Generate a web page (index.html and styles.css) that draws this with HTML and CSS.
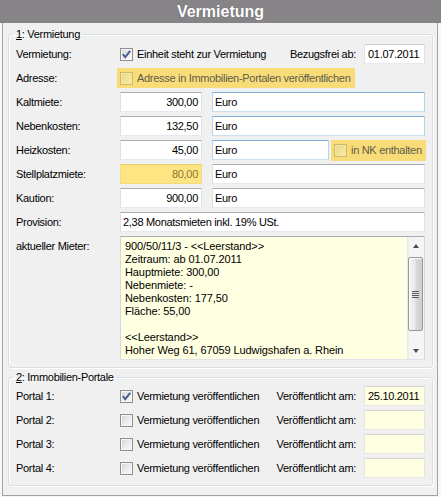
FILE: index.html
```html
<!DOCTYPE html>
<html lang="de">
<head>
<meta charset="utf-8">
<title>Vermietung</title>
<link rel="stylesheet" href="styles.css">
</head>
<body>
<div class="header">Vermietung</div>
<div class="frame">
  <fieldset class="group g1">
    <legend><u>1</u>: Vermietung</legend>
    <div class="rows">
      <div class="row">
        <div class="label">Vermietung:</div>
        <div class="ctrl">
          <div class="check"><span class="cb"><svg width="11" height="11" viewBox="0 0 11 11"><path d="M1.8 5.2 L4.2 8.2 L9.2 1.8" fill="none" stroke="#4b5d92" stroke-width="2"/></svg></span>Einheit steht zur Vermietung</div>
          <span class="rlabel">Bezugsfrei ab:</span>
          <div class="field date">01.07.2011</div>
        </div>
      </div>
      <div class="row">
        <div class="label">Adresse:</div>
        <div class="ctrl">
          <div class="check hl"><span class="cb dis"></span>Adresse in Immobilien-Portalen veröffentlichen</div>
        </div>
      </div>
      <div class="row">
        <div class="label">Kaltmiete:</div>
        <div class="ctrl">
          <div class="field num">300,00</div>
          <div class="field unit blue">Euro</div>
        </div>
      </div>
      <div class="row">
        <div class="label">Nebenkosten:</div>
        <div class="ctrl">
          <div class="field num">132,50</div>
          <div class="field unit blue">Euro</div>
        </div>
      </div>
      <div class="row">
        <div class="label">Heizkosten:</div>
        <div class="ctrl">
          <div class="field num">45,00</div>
          <div class="field unit short blue">Euro</div>
          <div class="check hl nk"><span class="cb dis"></span>in NK enthalten</div>
        </div>
      </div>
      <div class="row">
        <div class="label">Stellplatzmiete:</div>
        <div class="ctrl">
          <div class="field num yel">80,00</div>
          <div class="field unit">Euro</div>
        </div>
      </div>
      <div class="row">
        <div class="label">Kaution:</div>
        <div class="ctrl">
          <div class="field num">900,00</div>
          <div class="field unit">Euro</div>
        </div>
      </div>
      <div class="row">
        <div class="label">Provision:</div>
        <div class="ctrl">
          <div class="field wide">2,38 Monatsmieten inkl. 19% USt.</div>
        </div>
      </div>
      <div class="row tall">
        <div class="label top">aktueller Mieter:</div>
        <div class="ctrl">
          <div class="memo">
            <div class="memo-text">900/50/11/3 - &lt;&lt;Leerstand&gt;&gt;
Zeitraum: ab 01.07.2011
Hauptmiete: 300,00
Nebenmiete: -
Nebenkosten: 177,50
Fläche: 55,00

&lt;&lt;Leerstand&gt;&gt;
Hoher Weg 61, 67059 Ludwigshafen a. Rhein</div>
            <div class="scroll">
              <div class="arrow"><span class="tri up"></span></div>
              <div class="thumb"><span class="grip"></span></div>
              <div class="track"></div>
              <div class="arrow"><span class="tri down"></span></div>
            </div>
          </div>
        </div>
      </div>
    </div>
  </fieldset>

  <fieldset class="group g2">
    <legend><u>2</u>: Immobilien-Portale</legend>
    <div class="rows">
      <div class="row">
        <div class="label">Portal 1:</div>
        <div class="ctrl">
          <div class="check"><span class="cb"><svg width="11" height="11" viewBox="0 0 11 11"><path d="M1.8 5.2 L4.2 8.2 L9.2 1.8" fill="none" stroke="#4b5d92" stroke-width="2"/></svg></span>Vermietung veröffentlichen</div>
          <span class="rlabel">Veröffentlicht am:</span>
          <div class="field date pale">25.10.2011</div>
        </div>
      </div>
      <div class="row">
        <div class="label">Portal 2:</div>
        <div class="ctrl">
          <div class="check"><span class="cb"></span>Vermietung veröffentlichen</div>
          <span class="rlabel">Veröffentlicht am:</span>
          <div class="field date pale"></div>
        </div>
      </div>
      <div class="row">
        <div class="label">Portal 3:</div>
        <div class="ctrl">
          <div class="check"><span class="cb"></span>Vermietung veröffentlichen</div>
          <span class="rlabel">Veröffentlicht am:</span>
          <div class="field date pale"></div>
        </div>
      </div>
      <div class="row">
        <div class="label">Portal 4:</div>
        <div class="ctrl">
          <div class="check"><span class="cb"></span>Vermietung veröffentlichen</div>
          <span class="rlabel">Veröffentlicht am:</span>
          <div class="field date pale"></div>
        </div>
      </div>
    </div>
  </fieldset>
</div>
</body>
</html>
```
FILE: styles.css
```css
* { box-sizing: border-box; }
html, body { margin: 0; padding: 0; }
body {
  width: 441px;
  height: 497px;
  overflow: hidden;
  background: #f7f7f7;
  font-family: "Liberation Sans", Arial, sans-serif;
  font-size: 11px;
  letter-spacing: -0.3px;
  color: #000;
}
.header {
  height: 23px;
  background: #868486;
  color: #fff;
  font-weight: bold;
  font-size: 16px;
  letter-spacing: 0;
  line-height: 23px;
  text-align: center;
  text-shadow: 0 0 1px rgba(0,0,0,0.35);
}
.frame {
  margin: 0 3px 0 2px;
  height: 473px;
  background: #f0f0f0;
  border: 1px solid #a3a3a3;
  border-top: none;
  padding: 5px 4px 9px 5px;
}
.group {
  margin: 0;
  min-width: 0;
  border: 1px solid #d5dfe5;
  border-radius: 3px;
  padding: 3px 7px 7px 7px;
  box-shadow: inset 1px 1px 0 #fff, 1px 1px 0 #fff;
}
.group legend {
  padding: 0 3px;
  margin-left: -3px;
  line-height: 13px;
}
.g2 { margin-top: 3px; padding-top: 2px; }
.rows { display: flex; flex-direction: column; gap: 4px; }
.row { display: flex; align-items: center; height: 20px; }
.row.tall { height: 124px; align-items: flex-start; }
.label { width: 104px; flex: none; line-height: 13px; white-space: nowrap; }
.label.top { padding-top: 4px; }
.ctrl { flex: 1; display: flex; align-items: center; min-width: 0; }
.check { display: flex; align-items: center; gap: 4px; white-space: nowrap; height: 20px; }
.rlabel { margin-left: auto; margin-right: 8px; white-space: nowrap; }
.cb {
  width: 13px;
  height: 13px;
  flex: none;
  border: 1px solid #8e8f8f;
  background: linear-gradient(135deg, #d2d5da 0%, #eeeeee 60%, #fbfbfb 100%);
  box-shadow: inset 0 0 0 1px #f6f6f6;
  display: flex;
}
.cb.dis {
  border-color: #cdb96c;
  background: linear-gradient(135deg, #ead68a 0%, #f4e39c 60%, #f9eaa8 100%);
  box-shadow: inset 0 0 0 1px #f7e6a0;
}
.hl {
  background: #f8dc78;
  color: #605c4c;
  margin-left: -3px;
  padding: 0 5px 0 3px;
}
.hl.nk {
  width: 95px;
  height: 21px;
  margin-left: 2px;
  margin-right: -1px;
  align-self: flex-start;
  padding: 0 0 0 3px;
}
.field {
  height: 20px;
  flex: none;
  border: 1px solid;
  border-color: #abadb3 #dcdfe5 #e3e9ef #dcdfe5;
  background: #fff;
  padding: 0 2px;
  line-height: 18px;
  white-space: nowrap;
  overflow: hidden;
}
.num { width: 82px; text-align: right; padding-right: 3px; }
.unit { width: 213px; margin-left: 10px; }
.unit.short { width: 117px; }
.blue { border-color: #7daad3 #b7d5ea #c7e2f1 #b7d5ea; }
.yel { background: #fee582; border-color: #e6cf72 #f2dc80 #f2dc80 #f2dc80; color: #8a7830; }
.wide { width: 305px; }
.date { width: 61px; padding-left: 3px; border-color: #c8cacf #e0e2e6 #e6e9ed #e0e2e6; }
.pale { background: #ffffe1; border-color: #d4d4d4 #e3e3e3 #e6e6e6 #e3e3e3; }
.memo {
  width: 305px;
  height: 124px;
  flex: none;
  display: flex;
  border: 1px solid;
  border-color: #abadb3 #d5d8dd #dfe3e8 #d5d8dd;
  background: #ffffe1;
}
.memo-text {
  flex: 1;
  padding: 3px 4px;
  line-height: 13px;
  letter-spacing: -0.1px;
  white-space: pre;
  overflow: hidden;
}
.scroll {
  width: 17px;
  flex: none;
  display: flex;
  flex-direction: column;
  background: linear-gradient(to right, #e6e6e6, #f4f4f4 15%, #f6f6f6);
}
.arrow { height: 17px; flex: none; display: flex; align-items: center; justify-content: center; }
.tri { width: 0; height: 0; border-left: 3.5px solid transparent; border-right: 3.5px solid transparent; }
.tri.up { border-bottom: 4px solid #4a4a4a; }
.tri.down { border-top: 4px solid #4a4a4a; }
.thumb {
  margin: 3px 1px 0 1px;
  height: 74px;
  flex: none;
  border: 1px solid #979797;
  border-radius: 2px;
  background: linear-gradient(to right, #f4f4f4, #e9e9e9 45%, #d9d9d9 55%, #cfcfcf);
  box-shadow: inset 1px 1px 0 #fcfcfc;
  display: flex;
  align-items: center;
  justify-content: center;
}
.grip {
  width: 7px;
  height: 7px;
  background: repeating-linear-gradient(to bottom, #585858 0, #585858 1px, #e8e8e8 1px, #e8e8e8 2px);
}
.track { flex: 1; }
```
